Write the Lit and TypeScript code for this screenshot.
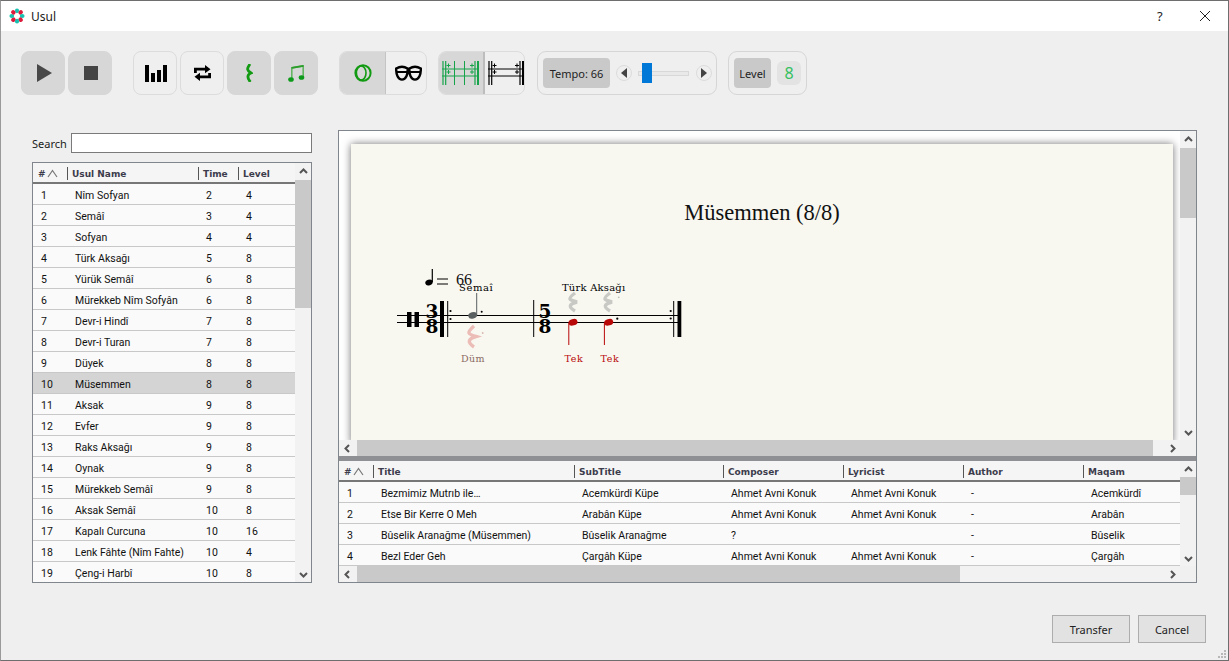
import { LitElement, html, css, svg } from 'lit';
import { customElement } from 'lit/decorators.js';

const USULS: [string, string, string, string][] = [
  ['1', 'Nîm Sofyan', '2', '4'],
  ['2', 'Semâî', '3', '4'],
  ['3', 'Sofyan', '4', '4'],
  ['4', 'Türk Aksağı', '5', '8'],
  ['5', 'Yürük Semâî', '6', '8'],
  ['6', 'Mürekkeb Nîm Sofyân', '6', '8'],
  ['7', 'Devr-i Hindî', '7', '8'],
  ['8', 'Devr-i Turan', '7', '8'],
  ['9', 'Düyek', '8', '8'],
  ['10', 'Müsemmen', '8', '8'],
  ['11', 'Aksak', '9', '8'],
  ['12', 'Evfer', '9', '8'],
  ['13', 'Raks Aksağı', '9', '8'],
  ['14', 'Oynak', '9', '8'],
  ['15', 'Mürekkeb Semâî', '9', '8'],
  ['16', 'Aksak Semâî', '10', '8'],
  ['17', 'Kapalı Curcuna', '10', '16'],
  ['18', 'Lenk Fâhte (Nîm Fahte)', '10', '4'],
  ['19', 'Çeng-i Harbî', '10', '8'],
];

const PIECES: string[][] = [
  ['1', 'Bezmimiz Mutrıb ile…', 'Acemkürdî Küpe', 'Ahmet Avni Konuk', 'Ahmet Avni Konuk', '-', 'Acemkürdî'],
  ['2', 'Etse Bir Kerre O Meh', 'Arabân Küpe', 'Ahmet Avni Konuk', 'Ahmet Avni Konuk', '-', 'Arabân'],
  ['3', 'Bûselik Aranağme (Müsemmen)', 'Bûselik Aranağme', '?', '', '-', 'Bûselik'],
  ['4', 'Bezl Eder Geh', 'Çargâh Küpe', 'Ahmet Avni Konuk', 'Ahmet Avni Konuk', '-', 'Çargâh'],
];

const chevron = (dir: 'up' | 'down' | 'left' | 'right') => {
  const d = {
    up: 'M2 7 L5.5 3.5 L9 7',
    down: 'M2 4 L5.5 7.5 L9 4',
    left: 'M7 2 L3.5 5.5 L7 9',
    right: 'M4 2 L7.5 5.5 L4 9',
  }[dir];
  return html`<svg width="11" height="11" viewBox="0 0 11 11"><path d=${d} fill="none" stroke="#555" stroke-width="2"/></svg>`;
};

const sortMark = html`<svg class="sort" width="11" height="9" viewBox="0 0 11 9"><path d="M1 8 L5.5 1.5 L10 8" fill="none" stroke="#777" stroke-width="1.2"/></svg>`;

const vbar = (top: number, size: number) => html`
  <div class="vbar">
    <div class="sb-btn">${chevron('up')}</div>
    <div class="vtrack"><div class="thumb" style="margin-top:${top}px;height:${size}px"></div></div>
    <div class="sb-btn">${chevron('down')}</div>
  </div>`;

const hbar = (left: number, size: number) => html`
  <div class="hbar">
    <div class="sb-btn">${chevron('left')}</div>
    <div class="htrack"><div class="thumb" style="margin-left:${left}px;width:${size}px"></div></div>
    <div class="sb-btn">${chevron('right')}</div>
    <div class="corner"></div>
  </div>`;

const rest = (x: number, y: number, h: number, color: string) => {
  const k = h / 18;
  return svg`<path d="M${x + 2} ${y} C${x - 6} ${y + 6 * k} ${x - 4} ${y + 7 * k} ${x + 4} ${y + 9 * k} C${x - 4} ${y + 11 * k} ${x - 5} ${y + 14 * k} ${x + 2} ${y + 18 * k}" fill="none" stroke=${color} stroke-width="3.4"/>`;
};

const plus = (x: number, y: number, c: string) => svg`<path d="M${x - 2} ${y} H${x + 2} M${x} ${y - 2} V${y + 2}" stroke=${c} stroke-width="1"/>`;

@customElement('app-root')
export class AppRoot extends LitElement {
  static styles = css`
    :host {
      display: block;
      width: 1229px;
      height: 661px;
      overflow: hidden;
      font-family: 'Noto Sans', Roboto, sans-serif;
      font-size: 11px;
      color: #1a1a1a;
    }
    .window {
      position: relative;
      box-sizing: border-box;
      height: 661px;
      display: flex;
      flex-direction: column;
      background: #efefef;
      border: 1px solid #6e6e6e;
      border-left-color: #9a9a9a;
    }
    .titlebar {
      height: 30px;
      flex: none;
      background: #fff;
      display: flex;
      align-items: center;
      padding-left: 8px;
      font-size: 12px;
    }
    .titlebar .name { margin-left: 6px; flex: 1; }
    .help { width: 16px; font-size: 13px; color: #222; margin-right: 26px; }
    .close { margin-right: 17px; display: block; }

    .toolbar {
      height: 44px;
      flex: none;
      display: flex;
      margin-top: 20px;
      padding-left: 20px;
    }
    .btn {
      box-sizing: border-box;
      width: 44px;
      height: 44px;
      border-radius: 8px;
      border: 1px solid #dcdcdc;
      background: #efefef;
      display: flex;
      align-items: center;
      justify-content: center;
      margin-right: 3px;
    }
    .btn.on { background: #d7d7d7; border-color: #d7d7d7; }
    .nudge { margin-left: 2px; }
    .nudge-s { margin-left: 1px; }
    .sep-a { margin-left: 18px; }
    .seg {
      box-sizing: border-box;
      height: 44px;
      border: 1px solid #dcdcdc;
      border-radius: 8px;
      display: flex;
      overflow: hidden;
      flex: none;
    }
    .seg.first { margin-left: 18px; margin-right: 11px; width: 88px; }
    .seg.second { width: 87px; margin-right: 12px; }
    .seg > div { display: flex; align-items: center; justify-content: center; flex: none; }
    .seg .on { background: #d7d7d7; }
    .seg.first > div { width: 43px; padding-left: 1px; }
    .seg.first .on { width: 44px; border-right: 1px solid #c4c4c4; }
    .seg.second > div { width: 40px; padding-left: 1px; }
    .seg.second .on { width: 43px; padding-left: 0; border-right: 2px solid #bdbdbd; padding-right: 1px; }
    .frame {
      box-sizing: border-box;
      height: 44px;
      flex: none;
      border: 1px solid #d6d6d6;
      border-radius: 9px;
      display: flex;
      align-items: center;
      padding: 0 5px;
      margin-right: 11px;
    }
    .tempo { width: 180px; }
    .level { width: 79px; }
    .tag {
      height: 30px;
      flex: none;
      background: #c9c9c9;
      border-radius: 4px;
      display: flex;
      align-items: center;
      justify-content: center;
      color: #222;
    }
    .tempo .tag { width: 67px; }
    .level .tag { width: 37px; }
    .round {
      box-sizing: border-box;
      width: 16px;
      height: 16px;
      border-radius: 50%;
      border: 1px solid #dcdcdc;
      display: flex;
      align-items: center;
      justify-content: center;
      flex: none;
    }
    .round.prev { margin-left: 6px; }
    .slider {
      position: relative;
      box-sizing: border-box;
      width: 51px;
      height: 5px;
      margin: 0 7px 0 6px;
      flex: none;
      border: 1px solid #d8d8d8;
      background: #e9e9e9;
    }
    .knob {
      position: absolute;
      left: 3px;
      top: -9px;
      width: 10px;
      height: 20px;
      background: #0078d7;
    }
    .value {
      width: 24px;
      height: 24px;
      flex: none;
      margin-left: 6px;
      border-radius: 6px;
      background: #e3e3e3;
      color: #35c060;
      font-size: 16px;
      display: flex;
      align-items: center;
      justify-content: center;
    }

    .main {
      flex: 1;
      display: flex;
      padding: 35px 0 0 31px;
      min-height: 0;
    }
    .left { width: 280px; flex: none; margin-right: 26px; padding-top: 3px; }
    .search { display: flex; align-items: center; height: 20px; margin-bottom: 9px; }
    .search label { width: 39px; }
    .search .field {
      box-sizing: border-box;
      width: 241px;
      height: 20px;
      background: #fff;
      border: 1px solid #7a7a7a;
    }
    .box {
      box-sizing: border-box;
      border: 1px solid #80868c;
      display: flex;
      background: #fafafa;
      overflow: hidden;
    }
    .usul-box { height: 421px; }
    .grid-area { flex: 1; min-width: 0; overflow: hidden; }
    .row {
      display: grid;
      height: 21px;
      box-sizing: border-box;
      border-bottom: 1px solid #c8c8c8;
      align-items: center;
      font-family: Roboto, 'Noto Sans', sans-serif;
      font-size: 10.5px;
      color: #111;
    }
    .usul { grid-template-columns: 34px 131px 40px 57px; }
    .pieces { grid-template-columns: 34px 201px 149px 120px 120px 120px 97px; }
    .row.head {
      height: 21px;
      padding-top: 2px;
      background: #f5f5f5;
      border-bottom: 2px solid #777;
      font-family: 'DejaVu Sans', sans-serif;
      font-weight: 700;
      font-size: 9px;
      color: #3c3c4c;
    }
    .head > div {
      display: flex;
      align-items: center;
      height: 13px;
      padding-left: 4px;
      border-left: 1px solid #555;
    }
    .head > div:first-child { border-left: none; padding-left: 5px; }
    .head .sort { margin-left: 1px; }
    .row > .cell { padding: 2px 0 0 8px; white-space: nowrap; overflow: hidden; }
    .row.sel { background: #d4d4d4; }

    .vbar { width: 16px; flex: none; display: flex; flex-direction: column; background: #f2f2f2; }
    .hbar { height: 16px; flex: none; display: flex; background: #f2f2f2; }
    .sb-btn { width: 16px; height: 16px; flex: none; display: flex; align-items: center; justify-content: center; }
    .corner { width: 16px; flex: none; background: #f0f0f0; }
    .vtrack { flex: 1; overflow: hidden; }
    .vtrack .thumb { width: 100%; }
    .htrack { flex: 1; overflow: hidden; }
    .htrack .thumb { height: 100%; }
    .thumb { background: #c9c9c9; }

    .right {
      box-sizing: border-box;
      width: 859px;
      height: 453px;
      flex: none;
      border: 1px solid #80868c;
      display: flex;
      flex-direction: column;
    }
    .score { height: 325px; flex: none; display: flex; flex-direction: column; background: #fff; }
    .score-top { flex: 1; min-height: 0; display: flex; }
    .canvas { flex: 1; min-width: 0; overflow: hidden; padding: 13px 7px 0 12px; background: #fff; }
    .page { height: 300px; background: #f8f7f0; box-shadow: 0 0 8px rgba(0, 0, 0, 0.55); }
    .page svg { display: block; }
    .splitter { height: 5px; flex: none; background: #8f9094; }
    .table-wrap { flex: 1; display: flex; flex-direction: column; min-height: 0; background: #fafafa; }
    .table-top { flex: 1; display: flex; min-height: 0; }

    .actions {
      display: flex;
      justify-content: flex-end;
      padding: 0 22px 17px 0;
      gap: 8px;
      flex: none;
    }
    .push {
      box-sizing: border-box;
      height: 28px;
      background: #e2e2e2;
      border: 1px solid #adadad;
      display: flex;
      align-items: center;
      justify-content: center;
      color: #222;
    }
    .push.transfer { width: 78px; }
    .push.cancel { width: 68px; }
    .grip {
      position: absolute;
      right: 1px;
      bottom: 1px;
    }
  `;

  private logo() {
    const petals = [0, 45, 90, 135, 180, 225, 270, 315];
    return svg`<svg width="16" height="16" viewBox="-8 -8 16 16">
      ${petals.map(a => svg`<ellipse cx="0" cy="-5.2" rx="2.1" ry="2.4" transform="rotate(${a})" fill=${a % 90 === 0 ? '#18c0b0' : '#dc1a3c'}/>`)}
    </svg>`;
  }

  private scoreSvg() {
    const ink = '#000';
    const red = '#b80808';
    const serif = "'DejaVu Serif', 'Liberation Serif', serif";
    const times = "'Liberation Serif', serif";
    return svg`<svg width="822" height="296" viewBox="351 144 822 296">
      <text x="762" y="220" text-anchor="middle" font-family=${times} font-size="22.5" fill="#111">Müsemmen (8/8)</text>

      <ellipse cx="429" cy="282.5" rx="3.8" ry="2.8" fill=${ink} transform="rotate(-20 429 282.5)"/>
      <path d="M432.3 269 V282" stroke=${ink} stroke-width="1.2"/>
      <path d="M437 279 H448 M437 284 H448" stroke=${ink} stroke-width="1.2"/>
      <text x="456" y="285" font-family=${times} font-size="16" fill="#111">66</text>
      <text x="459" y="291" font-family=${serif} font-size="10" letter-spacing="0.6" fill="#000">Semaî</text>
      <text x="562" y="291" font-family=${serif} font-size="10" letter-spacing="0.2" fill="#000">Türk Aksağı</text>

      <path d="M397 315.5 H680 M397 322.5 H680" stroke=${ink} stroke-width="1.2"/>
      <rect x="407" y="312" width="4.5" height="15" fill=${ink}/>
      <rect x="414.5" y="312" width="4.5" height="15" fill=${ink}/>

      <text x="432" y="318" text-anchor="middle" font-family=${serif} font-weight="700" font-size="18.5" fill=${ink}>3</text>
      <text x="432" y="333" text-anchor="middle" font-family=${serif} font-weight="700" font-size="18.5" fill=${ink}>8</text>
      <rect x="440" y="301" width="4" height="36" fill=${ink}/>
      <path d="M447.7 301 V337" stroke=${ink} stroke-width="1"/>
      <circle cx="450.5" cy="311" r="1.1" fill=${ink}/><circle cx="450.5" cy="319" r="1.1" fill=${ink}/>

      <ellipse cx="472.7" cy="315.3" rx="4.5" ry="3.2" fill="#5a6060" transform="rotate(-15 472.7 315.3)"/>
      <path d="M476.7 293 V315" stroke="#5a6060" stroke-width="1"/>
      <circle cx="481.7" cy="311.7" r="1" fill=${ink}/>
      ${rest(472, 326, 21, '#ecbcb6')}
      <circle cx="482.7" cy="333" r="0.9" fill="#d8b8b0"/>
      <text x="473" y="362" text-anchor="middle" font-family=${serif} font-size="9.5" letter-spacing="0.5" fill="#8a6a62">Düm</text>

      <path d="M533.7 300 V337" stroke=${ink} stroke-width="1"/>
      <text x="545" y="318" text-anchor="middle" font-family=${serif} font-weight="700" font-size="18.5" fill=${ink}>5</text>
      <text x="545" y="333" text-anchor="middle" font-family=${serif} font-weight="700" font-size="18.5" fill=${ink}>8</text>

      ${rest(573, 293, 18, '#c8c8c4')}
      ${rest(608, 293, 18, '#c8c8c4')}
      <circle cx="618.7" cy="297.3" r="0.9" fill="#c0c0bc"/>

      <ellipse cx="573" cy="322.3" rx="4.6" ry="3.2" fill=${red} transform="rotate(-18 573 322.3)"/>
      <path d="M568.8 323 V345" stroke=${red} stroke-width="1"/>
      <ellipse cx="608.7" cy="322.3" rx="4.6" ry="3.2" fill=${red} transform="rotate(-18 608.7 322.3)"/>
      <path d="M604.4 323 V345" stroke=${red} stroke-width="1"/>
      <circle cx="617.3" cy="318.7" r="1.1" fill=${ink}/>
      <text x="574" y="362" text-anchor="middle" font-family=${serif} font-size="9.5" letter-spacing="0.6" fill=${red}>Tek</text>
      <text x="610" y="362" text-anchor="middle" font-family=${serif} font-size="9.5" letter-spacing="0.6" fill=${red}>Tek</text>

      <circle cx="670.7" cy="311" r="1.1" fill=${ink}/><circle cx="670.7" cy="318.5" r="1.1" fill=${ink}/>
      <path d="M673.7 301 V337" stroke=${ink} stroke-width="1"/>
      <rect x="677.5" y="301" width="3.8" height="36" fill=${ink}/>
    </svg>`;
  }

  private measureIcon(c: string, grid: boolean) {
    // both icons share the same staff, the first one also has the inner beat lines
    const w = grid ? 37 : 36;
    return svg`<svg width=${w} height="24" viewBox="0 0 ${w} 24">
      <path d="M1 0 V24 M3.7 0 V24 M${w - 4} 0 V24" stroke=${c} stroke-width="1.2" fill="none"/>
      <path d="M${w - 1} 0 V24" stroke=${c} stroke-width="2" fill="none"/>
      <path d="M0 8 H${w} M0 15 H${w}" stroke=${c} stroke-width="1"/>
      ${grid ? svg`<path d="M12.5 0 V24 M22.5 0 V24" stroke=${c} stroke-width="1"/>` : ''}
      ${plus(6.5, 4.5, c)}${plus(6.5, 11, c)}${plus(w - 7, 4.5, c)}${plus(w - 7, 11, c)}
    </svg>`;
  }

  render() {
    return html`
      <div class="window">
        <div class="titlebar">
          ${this.logo()}
          <span class="name">Usul</span>
          <span class="help">?</span>
          <svg class="close" width="12" height="12" viewBox="0 0 12 12"><path d="M1 1 L11 11 M11 1 L1 11" stroke="#222" stroke-width="1"/></svg>
        </div>

        <div class="toolbar">
          <div class="btn on"><svg class="nudge" width="15" height="18" viewBox="0 0 15 18"><path d="M0 0 L15 9 L0 18 Z" fill="#484848"/></svg></div>
          <div class="btn on"><svg class="nudge-s" width="14" height="14"><rect width="14" height="14" fill="#444"/></svg></div>

          <div class="btn sep-a"><svg class="nudge-s" width="22" height="17" viewBox="0 0 22 17">
            <rect x="0" y="0" width="4" height="17"/><rect x="6" y="8" width="4" height="9"/>
            <rect x="12" y="5" width="4" height="12"/><rect x="18" y="0" width="4" height="17"/>
          </svg></div>
          <div class="btn"><svg width="17" height="16" viewBox="0 0 17 16">
            <path d="M1.4 8 V4.2 H13 M15.6 8 V11.8 H4" fill="none" stroke="#000" stroke-width="2.8"/>
            <path d="M11 0 L16.5 4.2 L11 8.2 Z M6 7.8 L0.5 11.8 L6 16 Z" fill="#000"/>
          </svg></div>
          <div class="btn on"><svg width="7" height="18" viewBox="0 0 7 18">
            <path d="M4 0 C0.5 5 0.8 6 5 9 C1 10.5 1 14 4.4 18" fill="none" stroke="#129a12" stroke-width="2.8"/>
          </svg></div>
          <div class="btn on"><svg width="17" height="17" viewBox="0 0 17 17">
            <path d="M3.8 14 V3 L15.2 1 V12" fill="none" stroke="#63b563" stroke-width="1.6"/>
            <path d="M3.5 2.8 L15.5 0.8" stroke="#2a9d2a" stroke-width="1.8"/>
            <ellipse cx="3" cy="14.5" rx="2.8" ry="2.3" fill="#0d9a1a"/>
            <ellipse cx="13.5" cy="12.5" rx="2.8" ry="2.3" fill="#0d9a1a"/>
          </svg></div>

          <div class="seg first">
            <div class="on"><svg width="18" height="18" viewBox="0 0 18 18">
              <ellipse cx="9" cy="9" rx="7.6" ry="7.8" fill="none" stroke="#129a12" stroke-width="2"/>
              <ellipse cx="7.2" cy="9" rx="4.8" ry="7" fill="none" stroke="#129a12" stroke-width="1.6"/>
            </svg></div>
            <div><svg width="27" height="16" viewBox="0 0 27 16">
              <path d="M1.2 3.5 C5 1.2 9 1.2 12.6 3.5 C13 9.5 11 14.6 7 14.6 C3 14.6 1 9.5 1.2 3.5 Z M14.4 3.5 C18 1.2 22 1.2 25.8 3.5 C26 9.5 24 14.6 20 14.6 C16 14.6 14 9.5 14.4 3.5 Z" fill="none" stroke="#000" stroke-width="2.4"/>
              <path d="M1 7 H13 M14 7 H26" stroke="#000" stroke-width="2"/>
            </svg></div>
          </div>
          <div class="seg second">
            <div class="on">${this.measureIcon('#16a34a', true)}</div>
            <div>${this.measureIcon('#000', false)}</div>
          </div>

          <div class="frame tempo">
            <div class="tag">Tempo: 66</div>
            <div class="round prev"><svg width="8" height="10"><path d="M7 0 L1 5 L7 10 Z" fill="#444"/></svg></div>
            <div class="slider"><div class="knob"></div></div>
            <div class="round"><svg width="8" height="10"><path d="M1 0 L7 5 L1 10 Z" fill="#444"/></svg></div>
          </div>
          <div class="frame level">
            <div class="tag">Level</div>
            <div class="value">8</div>
          </div>
        </div>

        <div class="main">
          <div class="left">
            <div class="search"><label>Search</label><div class="field"></div></div>
            <div class="box usul-box">
              <div class="grid-area">
                <div class="row usul head">
                  <div># ${sortMark}</div><div>Usul Name</div><div>Time</div><div>Level</div>
                </div>
                ${USULS.map(u => html`
                  <div class="row usul ${u[0] === '10' ? 'sel' : ''}">
                    ${u.map(v => html`<div class="cell">${v}</div>`)}
                  </div>`)}
              </div>
              ${vbar(1, 128)}
            </div>
          </div>

          <div class="right">
            <div class="score">
              <div class="score-top">
                <div class="canvas"><div class="page">${this.scoreSvg()}</div></div>
                ${vbar(1, 70)}
              </div>
              ${hbar(2, 796)}
            </div>
            <div class="splitter"></div>
            <div class="table-wrap">
              <div class="table-top">
                <div class="grid-area">
                  <div class="row pieces head">
                    <div># ${sortMark}</div><div>Title</div><div>SubTitle</div><div>Composer</div>
                    <div>Lyricist</div><div>Author</div><div>Maqam</div>
                  </div>
                  ${PIECES.map(p => html`
                    <div class="row pieces">${p.map(v => html`<div class="cell">${v}</div>`)}</div>`)}
                </div>
                ${vbar(0, 18)}
              </div>
              ${hbar(2, 603)}
            </div>
          </div>
        </div>

        <div class="actions">
          <div class="push transfer">Transfer</div>
          <div class="push cancel">Cancel</div>
        </div>
        <svg class="grip" width="10" height="10" viewBox="0 0 10 10" fill="#b8b8b8">
          <rect x="7" y="1" width="2" height="2"/><rect x="4" y="4" width="2" height="2"/><rect x="7" y="4" width="2" height="2"/>
          <rect x="1" y="7" width="2" height="2"/><rect x="4" y="7" width="2" height="2"/><rect x="7" y="7" width="2" height="2"/>
        </svg>
      </div>
    `;
  }
}
